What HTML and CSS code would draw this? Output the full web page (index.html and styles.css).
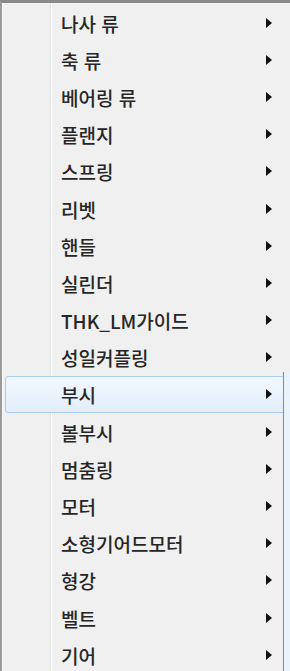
FILE: index.html
```html
<!DOCTYPE html>
<html lang="ko">
<head>
  <meta charset="UTF-8">
  <meta name="viewport" content="width=device-width, initial-scale=1.0">
  <title>메뉴</title>
  <link rel="stylesheet" href="styles.css">
</head>
<body>
<div class="menu">
  <div class="item"><span class="label">나사 류</span><span class="arrow"></span></div>
  <div class="item"><span class="label">축 류</span><span class="arrow"></span></div>
  <div class="item"><span class="label">베어링 류</span><span class="arrow"></span></div>
  <div class="item"><span class="label">플랜지</span><span class="arrow"></span></div>
  <div class="item"><span class="label">스프링</span><span class="arrow"></span></div>
  <div class="item"><span class="label">리벳</span><span class="arrow"></span></div>
  <div class="item"><span class="label">핸들</span><span class="arrow"></span></div>
  <div class="item"><span class="label">실린더</span><span class="arrow"></span></div>
  <div class="item"><span class="label">THK_LM가이드</span><span class="arrow"></span></div>
  <div class="item"><span class="label">성일커플링</span><span class="arrow"></span></div>
  <div class="item active"><span class="label">부시</span><span class="arrow"></span></div>
  <div class="item"><span class="label">볼부시</span><span class="arrow"></span></div>
  <div class="item"><span class="label">멈춤링</span><span class="arrow"></span></div>
  <div class="item"><span class="label">모터</span><span class="arrow"></span></div>
  <div class="item"><span class="label">소형기어드모터</span><span class="arrow"></span></div>
  <div class="item"><span class="label">형강</span><span class="arrow"></span></div>
  <div class="item"><span class="label">벨트</span><span class="arrow"></span></div>
  <div class="item"><span class="label">기어</span><span class="arrow"></span></div>
  <!-- edge of the opened submenu -->
  <div class="submenu-edge"></div>
</div>
</body>
</html>
```

FILE: styles.css
```css
/* Windows 7 style context menu */
body {
  margin: 0;
  background: #f0f0f0;
  font-family: "Noto Sans CJK KR", "Noto Sans", sans-serif;
}
.menu {
  position: relative;
  width: 290px;
  height: 671px;
  box-sizing: border-box;
  border-top: 3px solid #8a8a8a;
  border-left: 2px solid #9a9a9a;
  padding-top: 1px;
  background:
    linear-gradient(to right,
      #fbfbfb 0, #fbfbfb 1px,
      #f0f0f0 1px, #f0f0f0 48px,
      #e2e3e3 48px, #e2e3e3 49px,
      #ffffff 49px, #ffffff 50px,
      #f0f0f0 50px);
  overflow: hidden;
}
.item {
  display: flex;
  align-items: center;
  height: 37.2px;
  margin: 0 3px;
  padding: 0 14px 0 55px;
  box-sizing: border-box;
  border: 1px solid transparent;
  border-radius: 3px;
}
.item.active {
  border-color: #aaccf0;
  background: linear-gradient(to bottom, #f1f7fd, #e3eefb);
}
.label {
  flex: 1;
  font-size: 19px;
  font-weight: 500;
  color: #262626;
  line-height: 1;
  margin-top: 1px;
}
.arrow {
  width: 0;
  height: 0;
  border-top: 5px solid transparent;
  border-bottom: 5px solid transparent;
  border-left: 6px solid #111;
}
.submenu-edge {
  position: absolute;
  left: 281px;
  top: 369px;
  width: 8px;
  bottom: 0;
  border-left: 1px solid #8a8a8a;
  background: #eaf2fb;
}
```
